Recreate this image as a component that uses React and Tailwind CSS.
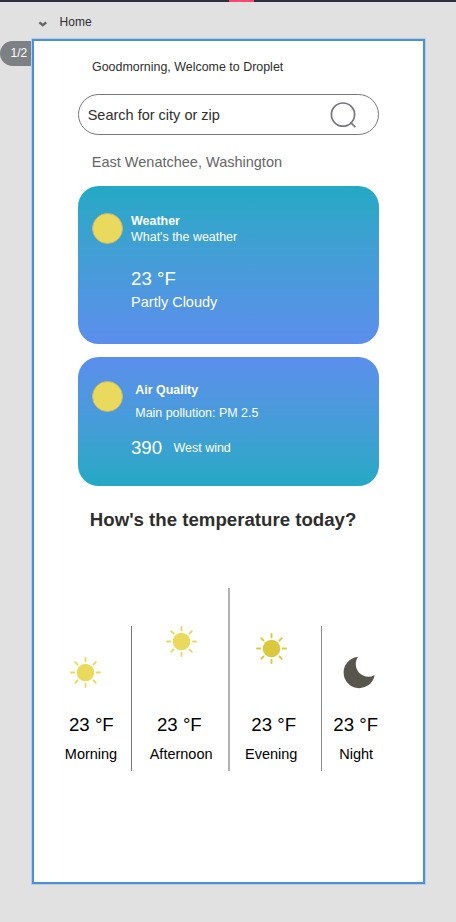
import React from "react";

function Disc() {
  return (
    <div className="mt-[27px] h-[31px] w-[31px] shrink-0 rounded-full border border-[#cdb76a] bg-[#e9da5d]" />
  );
}

function SunIcon() {
  return (
    <svg className="block h-[31px] w-[31px]" viewBox="0 0 31 31" fill="none" stroke="currentColor" strokeWidth="1.9" strokeLinecap="round">
      <circle cx="15.5" cy="15.5" r="8.8" fill="currentColor" stroke="none" />
      <path d="M15.5 1v3.2M15.5 26.8V30M1 15.5h3.2M26.8 15.5H30M5.2 5.2l2.3 2.3M23.5 23.5l2.3 2.3M5.2 25.8l2.3-2.3M23.5 7.5l2.3-2.3" />
    </svg>
  );
}

function MoonIcon() {
  return (
    <svg className="block h-8 w-8" viewBox="0 0 32 32" fill="currentColor">
      <path d="M14.9 0.2 C9.6 7.7 14.5 19.8 25.5 19.8 Q28.6 19.8 31 18.3 Q31.8 18.2 31.4 19.2 A15.6 15.6 0 1 1 14.2 0.1 Q15.3 -0.3 14.9 0.2 Z" />
    </svg>
  );
}

function Period({ className, icon, iconClass, temp, tempClass, label, labelClass }) {
  return (
    <div className={`flex flex-col ${className}`}>
      <div className={iconClass}>{icon}</div>
      <div className="flex-1" />
      <p className={`text-[18.65px] leading-6 ${tempClass}`}>{temp}</p>
      <p className={`mb-[7px] mt-[7px] text-[14.5px] leading-5 ${labelClass}`}>{label}</p>
    </div>
  );
}

export default function App() {
  return (
    <div className="h-[922px] w-[456px] overflow-hidden bg-[#e1e1e1] font-['Liberation_Sans',Arial,sans-serif] text-[12.44px] text-[#2e2e2e]">
      <div className="flex h-0.5 bg-[#2b2f40]">
        <div className="ml-[229px] w-[25px] bg-[#ff4571]" />
      </div>
      <div className="flex h-[37px] items-start pl-[38px]">
        <svg className="mt-[18px] h-2 w-[10px]" viewBox="0 0 10 8" fill="none" stroke="#666" strokeWidth="2.5">
          <path d="M1.4 2.4 L4.8 5.2 L8.2 2.4" />
        </svg>
        <span className="ml-[11.6px] mt-3 text-xs leading-4">Home</span>
      </div>
      <div className="flex items-start">
        <div className="mt-[2px] h-[25px] w-8 rounded-l-full bg-[#7d8084] pl-[10.6px] text-xs leading-[25px] text-white">1/2</div>
        <main className="flex h-[845px] w-[393px] flex-col border-2 border-[#4a90d9] bg-white shadow-[0_0_0_1px_#bccddf]">
          <h1 className="ml-[58px] mt-[18px] leading-4">Goodmorning, Welcome to Droplet</h1>
          <div className="ml-[44.3px] mt-[19px] flex h-[41px] w-[300.4px] items-center justify-between rounded-full border border-[#777] pl-[8.4px] pr-[20.4px]">
            <span className="text-[14.5px] leading-5">Search for city or zip</span>
            <svg className="h-7 w-7" viewBox="0 0 28 28" fill="none" stroke="#74777b" strokeWidth="1.7">
              <circle cx="14" cy="13.6" r="11.6" />
              <path d="M21.7 21.6 L26.4 26.1" />
            </svg>
          </div>
          <p className="ml-[57.8px] mt-[17px] text-[14.5px] leading-5 text-[#666]">East Wenatchee, Washington</p>

          <section className="ml-[44.3px] mt-[13.6px] flex h-[158.8px] w-[300.4px] shrink-0 rounded-[20.7px] bg-linear-to-b from-[#23a9c4] to-[#5b8eec] pl-[13.4px] text-white">
            <Disc />
            <div className="ml-[8.4px]">
              <h2 className="mt-[27.4px] font-bold leading-4">Weather</h2>
              <p className="leading-4">What's the weather</p>
              <p className="mt-[22px] text-[18.65px] leading-6">23 °F</p>
              <p className="mt-[1px] text-[14.5px] leading-5">Partly Cloudy</p>
            </div>
          </section>

          <section className="ml-[44.3px] mt-[12.3px] flex h-[129.5px] w-[300.4px] shrink-0 rounded-[20.7px] bg-linear-to-b from-[#5b8eec] to-[#23a9c4] pl-[13.4px] text-white">
            <div className="-mt-[3.2px]"><Disc /></div>
            <div className="ml-[8.3px]">
              <h2 className="ml-[4.3px] mt-[25.3px] font-bold leading-4">Air Quality</h2>
              <p className="ml-[4.3px] mt-[7px] leading-4">Main pollution: PM 2.5</p>
              <div className="mt-[15px] flex">
                <span className="text-[18.65px] leading-6">390</span>
                <span className="ml-[11.5px] mt-1 leading-4">West wind</span>
              </div>
            </div>
          </section>

          <h2 className="ml-[55.8px] mt-[21.8px] text-[18.65px] font-bold leading-6">How's the temperature today?</h2>

          <section className="ml-4 mt-[56px] flex h-[183px] items-end text-black">
            <Period className="h-[145px] w-[82px] border-r border-[#777]" icon={<SunIcon />} iconClass="ml-5 mt-[31px] text-[#e9da5d]" temp="23 °F" tempClass="ml-[19px]" label="Morning" labelClass="ml-[14.8px]" />
            <Period className="h-[183px] w-[98px] border-r-2 border-[#b3b3b3]" icon={<SunIcon />} iconClass="ml-[34px] mt-[38px] text-[#e9da5d]" temp="23 °F" tempClass="ml-[25px]" label="Afternoon" labelClass="ml-[17.7px]" />
            <Period className="h-[145px] w-[92px] border-r border-[#8a8a8a]" icon={<SunIcon />} iconClass="ml-[26px] mt-[7px] text-[#dbc93d]" temp="23 °F" tempClass="ml-[21.3px]" label="Evening" labelClass="ml-[15px]" />
            <Period className="h-[145px] w-[69px]" icon={<MoonIcon />} iconClass="ml-[21.3px] mt-[31px] text-[#58564c]" temp="23 °F" tempClass="ml-[11.3px]" label="Night" labelClass="ml-[17.3px]" />
          </section>
        </main>
      </div>
    </div>
  );
}
